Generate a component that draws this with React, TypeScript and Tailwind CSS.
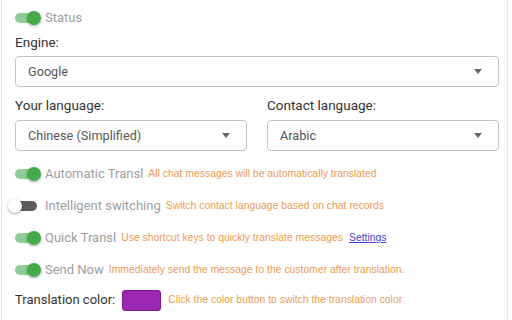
import React from "react";

function Toggle({ on }: { on: boolean }) {
  return (
    <div className="relative w-[22px] h-[10px] shrink-0">
      <div className={`absolute inset-0 rounded-full ${on ? "bg-[#8fcc93]" : "bg-[#5b5b5b]"}`} />
      <div
        className={`absolute top-[-2px] w-[14px] h-[14px] rounded-full shadow-[0_1px_3px_rgba(0,0,0,0.35)] ${
          on ? "left-[12px] bg-[#45ab4a]" : "left-[-7px] bg-white"
        }`}
      />
    </div>
  );
}

function Select({ value }: { value: string }) {
  return (
    <div className="flex items-center justify-between h-[31px] border border-[#c4c4c4] rounded-[4px] pl-[12px] pr-[16px] bg-white">
      <span className="text-[12.7px] text-[#555]">{value}</span>
      <svg width="8" height="5" viewBox="0 0 8 5">
        <path d="M0 0 L8 0 L4 5 Z" fill="#666" />
      </svg>
    </div>
  );
}

const descFont = { fontFamily: '"Liberation Sans", Arial, sans-serif' };

function Row({
  on,
  label,
  desc,
  link,
}: {
  on: boolean;
  label: string;
  desc: string;
  link?: string;
}) {
  return (
    <div className="flex items-center h-[32px]">
      <Toggle on={on} />
      <span className="ml-[8px] text-[13px] text-[#9e9e9e] whitespace-nowrap">{label}</span>
      <span className="ml-[5px] text-[10.4px] text-[#ee9a55] whitespace-nowrap" style={descFont}>
        {desc}
      </span>
      {link && (
        <span className="ml-[6px] text-[10.4px] text-[#4646c8] underline whitespace-nowrap" style={descFont}>
          {link}
        </span>
      )}
    </div>
  );
}

export default function App() {
  return (
    <div
      className="w-[512px] h-[320px] overflow-hidden bg-white"
      style={{ fontFamily: "Roboto, 'Noto Sans', sans-serif" }}
    >
      <div className="ml-[1px] w-[507px] h-[320px] border-l border-r border-[#e6e6e6] pl-[13px] pr-[8px]">
        <div className="flex items-center h-[34px] pt-[1px]">
          <Toggle on={true} />
          <span className="ml-[8px] text-[13px] text-[#9e9e9e]">Status</span>
        </div>
        <div className="text-[13.5px] text-[#333] h-[22px] leading-[16px]">Engine:</div>
        <Select value="Google" />
        <div className="flex gap-[20px] mt-[9px]">
          <div className="flex-1">
            <div className="text-[13.5px] text-[#333] h-[24px] leading-[18px]">Your language:</div>
            <Select value="Chinese (Simplified)" />
          </div>
          <div className="flex-1">
            <div className="text-[13.5px] text-[#333] h-[24px] leading-[18px]">Contact language:</div>
            <Select value="Arabic" />
          </div>
        </div>
        <div className="mt-[7px]">
          <Row on={true} label="Automatic Transl" desc="All chat messages will be automatically translated" />
          <Row on={false} label="Intelligent switching" desc="Switch contact language based on chat records" />
          <Row on={true} label="Quick Transl" desc="Use shortcut keys to quickly translate messages" link="Settings" />
          <Row on={true} label="Send Now" desc="Immediately send the message to the customer after translation." />
          <div className="flex items-center h-[28px]">
            <span className="text-[13px] text-[#333]">Translation color:</span>
            <div className="ml-[7px] w-[39px] h-[21px] rounded-[3px] bg-[#9c27b0] border border-[#7b1a8c]" />
            <span className="ml-[7px] text-[10.4px] text-[#ee9a55]" style={descFont}>
              Click the color button to switch the translation color
            </span>
          </div>
        </div>
      </div>
    </div>
  );
}
